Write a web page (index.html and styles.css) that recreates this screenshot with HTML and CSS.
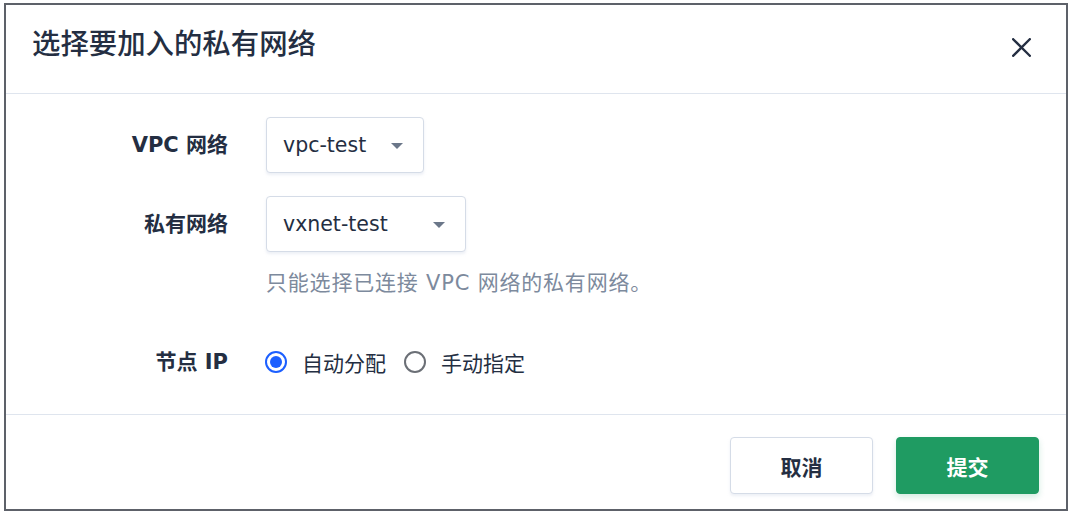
FILE: index.html
```html
<!DOCTYPE html>
<html lang="zh-CN">
<head>
<meta charset="utf-8">
<link rel="stylesheet" href="styles.css">
</head>
<body>
<div class="dialog">
  <div class="header">
    <h1 class="title">选择要加入的私有网络</h1>
    <button class="close" aria-label="关闭">
      <svg width="19" height="19" viewBox="0 0 19 19"><path d="M1.2 1.2 L17.8 17.8 M17.8 1.2 L1.2 17.8" stroke="#242e42" stroke-width="2.3" stroke-linecap="square" fill="none"/></svg>
    </button>
  </div>
  <div class="body">
    <div class="row">
      <div class="label">VPC 网络</div>
      <div class="control">
        <div class="select select-vpc"><span>vpc-test</span><i class="caret"></i></div>
      </div>
    </div>
    <div class="row">
      <div class="label">私有网络</div>
      <div class="control">
        <div class="select select-vxnet"><span>vxnet-test</span><i class="caret"></i></div>
        <div class="hint">只能选择已连接 VPC 网络的私有网络。</div>
      </div>
    </div>
    <div class="row row-radio">
      <div class="label">节点 IP</div>
      <div class="control radios">
        <label class="radio checked"><span class="dot"></span>自动分配</label>
        <label class="radio"><span class="dot"></span>手动指定</label>
      </div>
    </div>
  </div>
  <div class="footer">
    <button class="btn btn-cancel">取消</button>
    <button class="btn btn-submit">提交</button>
  </div>
</div>
</body>
</html>
```
FILE: styles.css
```css
* { box-sizing: border-box; }
html, body { margin: 0; padding: 0; background: #fff; }
body {
  font-family: "DejaVu Sans", "Noto Sans CJK SC", sans-serif;
  color: #242e42;
  padding: 3px 0 0 4px;
}
.dialog {
  width: 1064px;
  height: 508px;
  border: 2px solid #5d6169;
  background: #fff;
  display: flex;
  flex-direction: column;
}
.header {
  height: 89px;
  border-bottom: 1px solid #dfe5ee;
  display: flex;
  align-items: center;
  justify-content: space-between;
  padding: 0 35px 0 26px;
}
.title {
  margin: 0;
  font-size: 28.4px;
  font-weight: 500;
  line-height: 40px;
  margin-top: -14px;
  font-family: "Noto Sans CJK SC", sans-serif;
}
.close {
  border: 0;
  background: none;
  padding: 0;
  width: 19px;
  height: 19px;
  margin-top: -3px;
  display: flex;
}
.body {
  flex: 1;
  padding-top: 23px;
  border-bottom: 1px solid #dfe5ee;
  display: flex;
  flex-direction: column;
  gap: 23px;
}
.row {
  display: flex;
  align-items: flex-start;
}
.label {
  width: 222px;
  text-align: right;
  font-size: 21px;
  font-weight: 600;
  line-height: 56px;
  flex-shrink: 0;
}
.control {
  margin-left: 38px;
  display: flex;
  flex-direction: column;
}
.select {
  height: 56px;
  border: 1px solid #d5dce7;
  border-radius: 4px;
  box-shadow: 0 2px 3px rgba(200, 210, 225, 0.35);
  display: flex;
  align-items: center;
  justify-content: space-between;
  padding: 0 20px 0 16px;
  font-size: 20.5px;
  background: #fff;
}
.select-vpc { width: 158px; }
.select-vxnet { width: 200px; }
.caret {
  width: 0;
  height: 0;
  border-left: 6px solid transparent;
  border-right: 6px solid transparent;
  border-top: 6px solid #6b7789;
  margin-top: 2px;
}
.hint {
  margin-top: 16px;
  font-size: 21px;
  letter-spacing: 0.8px;
  line-height: 30px;
  color: #7d8a9d;
  white-space: nowrap;
}
.row-radio {
  margin-top: 26px;
}
.row-radio .label { line-height: 30px; }
.radios {
  flex-direction: row;
  align-items: center;
  height: 30px;
  margin-left: 37px;
}
.radio {
  display: flex;
  align-items: center;
  font-size: 21px;
  margin-right: 18px;
}
.dot {
  width: 22px;
  height: 22px;
  border-radius: 50%;
  border: 2px solid #6b6f76;
  margin-right: 15px;
  position: relative;
  background: #fff;
}
.radio.checked .dot { border-color: #1c5fff; }
.radio.checked .dot::after {
  content: "";
  position: absolute;
  left: 3px;
  top: 3px;
  width: 12px;
  height: 12px;
  border-radius: 50%;
  background: #1c5fff;
}
.footer {
  height: 94px;
  display: flex;
  justify-content: flex-end;
  align-items: flex-start;
  padding: 22px 27px 0 0;
  gap: 23px;
}
.btn {
  width: 143px;
  height: 57px;
  border-radius: 4px;
  font-family: "Noto Sans CJK SC", sans-serif;
  font-size: 21px;
  font-weight: 600;
  cursor: pointer;
}
.btn-cancel {
  background: #fff;
  border: 1px solid #d5dce7;
  color: #242e42;
  box-shadow: 0 2px 3px rgba(200, 210, 225, 0.35);
}
.btn-submit {
  background: #1f9b62;
  border: 1px solid #1f9b62;
  color: #fff;
  box-shadow: 0 3px 6px rgba(31, 155, 98, 0.2);
}
```
